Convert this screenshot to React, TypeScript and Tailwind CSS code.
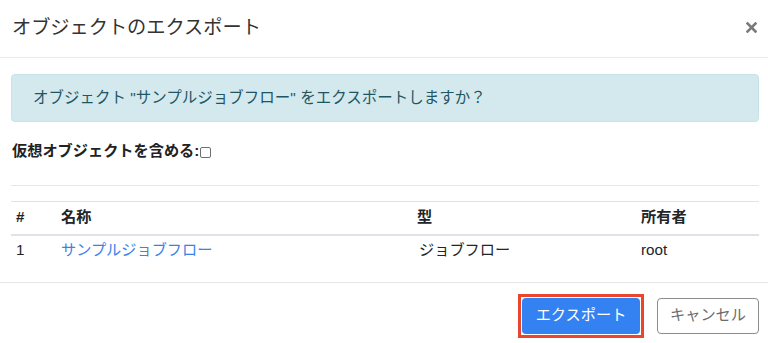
import React from "react";

export default function App() {
  const font = { fontFamily: '"Liberation Sans", "Noto Sans CJK JP", sans-serif' };
  return (
    <div className="w-[768px] h-[343px] bg-white overflow-hidden text-[#212529]" style={font}>
      {/* Header */}
      <div className="h-[58px] border-b border-[#e9ecef] flex items-center justify-between pl-[12px] pr-[11px]">
        <h5 className="text-[19.2px] leading-none text-[#333] pb-[2px]">オブジェクトのエクスポート</h5>
        <button className="w-[12px] h-[12px] flex items-center justify-center pb-[3px]" aria-label="close">
          <svg width="11" height="11" viewBox="0 0 11 11">
            <path d="M1.5 1.5 L9.5 9.5 M9.5 1.5 L1.5 9.5" stroke="#7a7a7a" strokeWidth="2.6" strokeLinecap="square" />
          </svg>
        </button>
      </div>

      {/* Body */}
      <div className="pl-[11px] pr-[9px] pt-[16px] pb-[16px]">
        <div className="h-[48px] rounded-[4px] bg-[#d4e9ee] border border-[#c6e3ea] flex items-center pl-[21px] text-[15.5px] text-[#1f5663]">
          オブジェクト "サンプルジョブフロー" をエクスポートしますか？
        </div>
        <div className="mt-[17px] h-[24px] flex items-center pl-px">
          <label className="text-[15.2px] font-bold text-[#222] flex items-center">
            仮想オブジェクトを含める:
            <input
              type="checkbox"
              className="appearance-none w-[11px] h-[11px] border border-[#6f6f6f] rounded-[2px] ml-[1px] mt-[3px] bg-white"
            />
          </label>
        </div>
        <div className="mt-[22px] h-px bg-[#e6e6e6]" />
        <table className="mt-[15px] w-full border-t border-[#dfe2e6] text-[15.2px] border-collapse">
          <thead>
            <tr className="h-[33px] border-b-2 border-[#dfe2e6]">
              <th className="w-[45px] text-left font-bold pl-[5px]">#</th>
              <th className="w-[356px] text-left font-bold pl-[5px]">名称</th>
              <th className="w-[224px] text-left font-bold pl-[5px]">型</th>
              <th className="text-left font-bold pl-[5px]">所有者</th>
            </tr>
          </thead>
          <tbody>
            <tr className="h-[31px]">
              <td className="pl-[5px]">1</td>
              <td className="pl-[5px] text-[#3a82e8]">サンプルジョブフロー</td>
              <td className="pl-[7px]">ジョブフロー</td>
              <td className="pl-[5px]">root</td>
            </tr>
          </tbody>
        </table>
      </div>

      {/* Footer */}
      <div className="border-t border-[#e3e6e9] flex items-center justify-end pt-[11px] pr-[9px] gap-[13px]">
        <div className="border-[3px] border-[#e8472e] p-px">
          <button className="w-[118px] h-[36px] rounded-[4px] bg-[#3482f2] text-white text-[15.2px] flex items-center justify-center">
            エクスポート
          </button>
        </div>
        <button className="w-[102px] h-[36px] rounded-[4px] border border-[#8c8c8c] text-[#6b6b6b] text-[15.2px] flex items-center justify-center">
          キャンセル
        </button>
      </div>
    </div>
  );
}
